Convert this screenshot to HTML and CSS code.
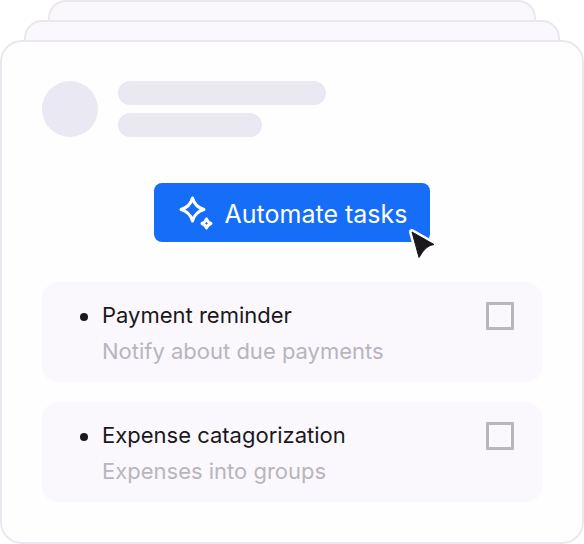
FILE: index.html
```html
<!DOCTYPE html>
<html lang="en">

<head>
  <meta charset="UTF-8">
  <meta name="viewport" content="width=device-width, initial-scale=1">
  <title>Automate tasks</title>
  <link rel="stylesheet" href="styles.css">
</head>

<body>
  <div class="sheet sheet-back"></div>
  <div class="sheet sheet-middle"></div>
  <main class="card">
    <header class="profile">
      <div class="avatar"></div>
      <div class="lines">
        <div class="line line-long"></div>
        <div class="line line-short"></div>
      </div>
    </header>

    <button class="automate" type="button">
      <svg class="sparkle" viewBox="0 0 36 36" aria-hidden="true">
        <path d="M15.5 2Q18 11 27 13.5Q18 16 15.5 25Q13 16 4 13.5Q13 11 15.5 2Z" fill="none" stroke="#fff" stroke-width="3" stroke-linejoin="round"/>
        <path d="M29.5 23Q30.7 26.3 34 27.5Q30.7 28.7 29.5 32Q28.3 28.7 25 27.5Q28.3 26.3 29.5 23Z" fill="none" stroke="#fff" stroke-width="3" stroke-linejoin="round"/>
      </svg>
      Automate tasks
      <svg class="cursor" viewBox="0 0 32 32" aria-hidden="true">
        <path d="M4 4L26 16.5L16 20L11 29.5Z" fill="#fff" stroke="#fff" stroke-width="6" stroke-linejoin="round"/>
        <path d="M4 4L26 16.5Q18 17 11 29.5Z" fill="#1b181c" stroke="#1b181c" stroke-width="1" stroke-linejoin="round"/>
      </svg>
    </button>

    <ul class="tasks">
      <li class="task">
        <label class="task-text" for="payment">
          <span class="task-name">Payment reminder</span>
          <span class="task-note">Notify about due payments</span>
        </label>
        <input type="checkbox" id="payment">
      </li>
      <li class="task">
        <label class="task-text" for="expense">
          <span class="task-name">Expense catagorization</span>
          <span class="task-note">Expenses into groups</span>
        </label>
        <input type="checkbox" id="expense">
      </li>
    </ul>
  </main>
</body>

</html>
```
FILE: styles.css
```css
*{
  box-sizing: border-box;
  margin: 0;
  padding: 0;
}

body{
  background: #fff;
  font-family: Inter, "Liberation Sans", sans-serif;
  color: #1b181c;
}

.sheet{
  height: 20px;
  background: #faf8fc;
  border: 2px solid #e9e8ef;
  border-bottom: 0;
  border-radius: 18px 18px 0 0;
}
.sheet-back{
  margin: 0 48px;
}
.sheet-middle{
  margin: 0 24px;
}

.card{
  display: flex;
  flex-direction: column;
  background: #fefefe;
  border: 2px solid #e9e8ef;
  border-radius: 22px;
  padding: 39px 40px 40px;
}

.profile{
  display: flex;
  gap: 20px;
}
.avatar{
  width: 56px;
  height: 56px;
  border-radius: 50%;
  background: #eae8f2;
}
.lines{
  display: flex;
  flex-direction: column;
  gap: 8px;
}
.line{
  height: 24px;
  border-radius: 12px;
  background: #eae8f2;
}
.line-long{
  width: 208px;
}
.line-short{
  width: 144px;
}

.automate{
  position: relative;
  display: flex;
  align-items: center;
  align-self: center;
  gap: 12px;
  margin-top: 46px;
  padding: 2px 23px 0;
  height: 59px;
  border: 0;
  border-radius: 8px;
  background: #156df8;
  color: #fff;
  font-family: Inter, "Liberation Sans", sans-serif;
  font-size: 25px;
  white-space: nowrap;
}
.sparkle{
  width: 36px;
  height: 36px;
}
.cursor{
  position: absolute;
  right: -10px;
  bottom: -18px;
  width: 32px;
  height: 32px;
  overflow: visible;
}

.tasks{
  display: flex;
  flex-direction: column;
  gap: 20px;
  margin-top: 40px;
  list-style: none;
}
.task{
  display: flex;
  justify-content: space-between;
  align-items: flex-start;
  padding: 15px 28px 13px 38px;
  background: #faf8fc;
  border-radius: 16px;
}
.task-text{
  display: grid;
  padding-left: 22px;
  font-size: 22px;
  line-height: 36px;
}
.task-name{
  display: flex;
  align-items: center;
}
.task-name::before{
  content: "";
  width: 8px;
  height: 8px;
  margin: 4px 14px 0 -22px;
  border-radius: 50%;
  background: #1b181c;
}
.task-note{
  color: #b8b5bd;
}
.task input{
  appearance: none;
  width: 28px;
  height: 28px;
  margin-top: 5px;
  border: 3px solid #b8b5bd;
  border-radius: 1px;
}
.task input:checked{
  background: #156df8;
}
```
